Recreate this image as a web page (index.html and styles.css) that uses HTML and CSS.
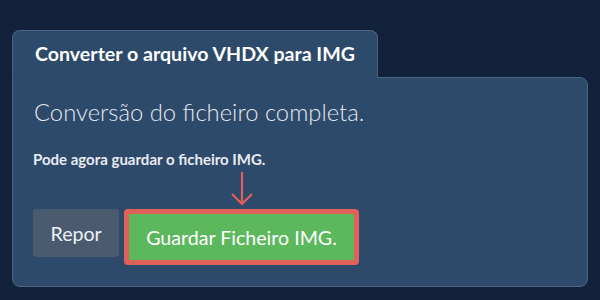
FILE: index.html
```html
<!DOCTYPE html>
<html lang="en">
<head>
  <meta charset="UTF-8">
  <meta name="viewport" content="width=device-width, initial-scale=1.0">
  <title>VHDX para IMG</title>
  <link rel="stylesheet" href="styles.css">
</head>
<body>
  <div class="wrap">
    <div class="tab">Converter o arquivo VHDX para IMG</div>
    <div class="panel">
      <h2>Conversão do ficheiro completa.</h2>
      <p class="note">Pode agora guardar o ficheiro IMG.</p>
      <div class="actions">
        <button class="btn btn-reset">Repor</button>
        <div class="save-wrap">
          <svg class="arrow" width="24" height="36" viewBox="0 0 24 36">
            <path d="M12 1 V33 M2 23 L12 33 L22 23" fill="none" stroke="#e0605a" stroke-width="2.2"/>
          </svg>
          <button class="btn btn-save">Guardar Ficheiro IMG.</button>
        </div>
      </div>
    </div>
  </div>
</body>
</html>
```

FILE: styles.css
```css
body { margin: 0; background: #11223a; font-family: Lato, "Open Sans", sans-serif; }
.wrap { padding: 30px 12px 0 12px; }
.tab { display: inline-block; position: relative; z-index: 1; margin-bottom: -1px; padding: 11px 22px 11px 22px; background: #2d4a6b; border: 1px solid #4b6484; border-bottom: 1px solid #2d4a6b; border-radius: 8px 8px 0 0; color: #fff; font-size: 19.6px; font-weight: bold; line-height: 24px; }
.panel { background: #2d4a6b; border: 1px solid #4b6484; border-radius: 0 8px 8px 8px; padding: 18px 20px 20px 20px; height: 170px; }
h2 { margin: 0 0 0 1px; color: #e4e8ee; font-size: 23.8px; font-weight: 300; line-height: 32px; }
.note { margin: 21px 0 0 0; color: #e8ebef; font-size: 15px; font-weight: bold; line-height: 20px; }
.actions { display: flex; align-items: flex-start; gap: 5px; margin-top: 40px; }
.btn { font-family: Lato, "Open Sans", sans-serif; font-size: 19.6px; color: #eef1f4; border: none; border-radius: 3px; cursor: pointer; }
.btn-reset { height: 48px; padding: 0 17.5px; background: #4a5b6f; }
.save-wrap { position: relative; }
.arrow { position: absolute; left: 50%; top: -38px; margin-left: -12px; display: block; }
.btn-save { height: 56px; padding: 0 17px; background: #5cb85c; color: #fff; border: 5px solid #e0605a; border-radius: 4px; }
```
